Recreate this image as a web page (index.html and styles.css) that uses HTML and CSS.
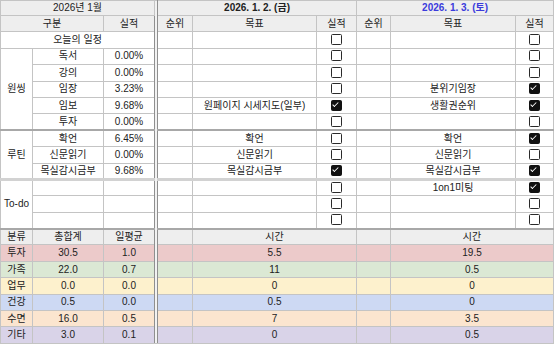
FILE: index.html
```html
<!DOCTYPE html>
<html lang="ko">
<head>
<meta charset="utf-8">
<link rel="stylesheet" href="styles.css">
</head>
<body>
<table class="sheet">
  <colgroup>
    <col class="c-cat"><col class="c-item"><col class="c-val">
    <col class="c-div">
    <col class="c-rank1"><col class="c-goal1"><col class="c-chk1">
    <col class="c-rank2"><col class="c-goal2"><col class="c-chk2">
  </colgroup>
  <tr class="first hdr">
    <td colspan="3">2026년 1월</td>
    <td class="divider" rowspan="21"></td>
    <td colspan="3" class="date">2026. 1. 2. (금)</td>
    <td colspan="3" class="date sat">2026. 1. 3. (토)</td>
  </tr>
  <tr class="hdr">
    <td colspan="2">구분</td><td>실적</td>
    <td>순위</td><td>목표</td><td>실적</td>
    <td>순위</td><td>목표</td><td>실적</td>
  </tr>
  <tr>
    <td colspan="3">오늘의 일정</td>
    <td></td><td></td><td><span class="cb"></span></td>
    <td></td><td></td><td><span class="cb"></span></td>
  </tr>
  <tr>
    <td rowspan="5">원씽</td><td>독서</td><td>0.00%</td>
    <td></td><td></td><td><span class="cb"></span></td>
    <td></td><td></td><td><span class="cb"></span></td>
  </tr>
  <tr>
    <td>강의</td><td>0.00%</td>
    <td></td><td></td><td><span class="cb"></span></td>
    <td></td><td></td><td><span class="cb"></span></td>
  </tr>
  <tr>
    <td>임장</td><td>3.23%</td>
    <td></td><td></td><td><span class="cb"></span></td>
    <td></td><td>분위기임장</td><td><span class="cb on"></span></td>
  </tr>
  <tr>
    <td>임보</td><td>9.68%</td>
    <td></td><td>원페이지 시세지도(일부)</td><td><span class="cb on"></span></td>
    <td></td><td>생활권순위</td><td><span class="cb on"></span></td>
  </tr>
  <tr>
    <td>투자</td><td>0.00%</td>
    <td></td><td></td><td><span class="cb"></span></td>
    <td></td><td></td><td><span class="cb"></span></td>
  </tr>
  <tr class="sep">
    <td rowspan="3">루틴</td><td>확언</td><td>6.45%</td>
    <td></td><td>확언</td><td><span class="cb"></span></td>
    <td></td><td>확언</td><td><span class="cb on"></span></td>
  </tr>
  <tr>
    <td>신문읽기</td><td>0.00%</td>
    <td></td><td>신문읽기</td><td><span class="cb"></span></td>
    <td></td><td>신문읽기</td><td><span class="cb"></span></td>
  </tr>
  <tr>
    <td>목실감시금부</td><td>9.68%</td>
    <td></td><td>목실감시금부</td><td><span class="cb on"></span></td>
    <td></td><td>목실감시금부</td><td><span class="cb on"></span></td>
  </tr>
  <tr class="freeze">
    <td rowspan="3">To-do</td><td></td><td></td>
    <td></td><td></td><td><span class="cb"></span></td>
    <td></td><td>1on1미팅</td><td><span class="cb on"></span></td>
  </tr>
  <tr>
    <td></td><td></td>
    <td></td><td></td><td><span class="cb"></span></td>
    <td></td><td></td><td><span class="cb"></span></td>
  </tr>
  <tr>
    <td></td><td></td>
    <td></td><td></td><td><span class="cb"></span></td>
    <td></td><td></td><td><span class="cb"></span></td>
  </tr>
  <tr class="hdr sep">
    <td>분류</td><td>총합계</td><td>일평균</td>
    <td></td><td colspan="2">시간</td>
    <td></td><td colspan="2">시간</td>
  </tr>
  <tr class="k-invest">
    <td>투자</td><td>30.5</td><td>1.0</td>
    <td></td><td colspan="2">5.5</td>
    <td></td><td colspan="2">19.5</td>
  </tr>
  <tr class="k-family">
    <td>가족</td><td>22.0</td><td>0.7</td>
    <td></td><td colspan="2">11</td>
    <td></td><td colspan="2">0.5</td>
  </tr>
  <tr class="k-work">
    <td>업무</td><td>0.0</td><td>0.0</td>
    <td></td><td colspan="2">0</td>
    <td></td><td colspan="2">0</td>
  </tr>
  <tr class="k-health">
    <td>건강</td><td>0.5</td><td>0.0</td>
    <td></td><td colspan="2">0.5</td>
    <td></td><td colspan="2">0</td>
  </tr>
  <tr class="k-sleep">
    <td>수면</td><td>16.0</td><td>0.5</td>
    <td></td><td colspan="2">7</td>
    <td></td><td colspan="2">3.5</td>
  </tr>
  <tr class="k-etc">
    <td>기타</td><td>3.0</td><td>0.1</td>
    <td></td><td colspan="2">0</td>
    <td></td><td colspan="2">0.5</td>
  </tr>
</table>
</body>
</html>
```
FILE: styles.css
```css
html, body {
  margin: 0;
  padding: 0;
  background: #ffffff;
}

.sheet {
  border-collapse: collapse;
  table-layout: fixed;
  width: 554px;
  font-family: "Liberation Sans", "Noto Sans CJK KR", sans-serif;
  font-size: 10px;
  color: #222222;
}

.c-cat { width: 32px; }
.c-item { width: 71px; }
.c-val { width: 51px; }
.c-div { width: 3px; }
.c-rank1 { width: 35px; }
.c-goal1 { width: 124px; }
.c-chk1 { width: 40px; }
.c-rank2 { width: 34px; }
.c-goal2 { width: 125px; }
.c-chk2 { width: 38px; }

.sheet tr { height: 16.4px; }
.sheet tr.first { height: 15px; }

.sheet td {
  border: 1px solid #c4c4c4;
  padding: 0;
  text-align: center;
  vertical-align: middle;
  line-height: 12px;
  white-space: nowrap;
  overflow: hidden;
}

.hdr td { background: #eeeeee; }

.date { font-weight: bold; color: #222222; }
.date.sat { color: #3b3bdc; }

.sheet td.divider {
  background: #f2f2f2;
  border-left: 1px solid #8f8f8f;
  border-right: 1px solid #8f8f8f;
}

.sep td { border-top: 2px solid #a8a8a8; }
.freeze td { border-top: 3px solid #d2d2d2; }

.cb {
  display: inline-block;
  box-sizing: border-box;
  width: 11px;
  height: 11px;
  border: 1.8px solid #2a2a2a;
  border-radius: 1.5px;
  vertical-align: middle;
  position: relative;
  top: -1px;
}

.cb.on {
  background: #111111;
  border-color: #111111;
}

.cb.on::after {
  content: "";
  position: absolute;
  left: 2.3px;
  top: 0px;
  width: 2.2px;
  height: 4.8px;
  border: solid #ffffff;
  border-width: 0 1.3px 1.3px 0;
  transform: rotate(45deg);
}

.k-invest td { background: #eccaca; }
.k-family td { background: #dbe8d4; }
.k-work td { background: #fdf1cd; }
.k-health td { background: #cdd9f3; }
.k-sleep td { background: #fbe5cf; }
.k-etc td { background: #d9d3e8; }
```
